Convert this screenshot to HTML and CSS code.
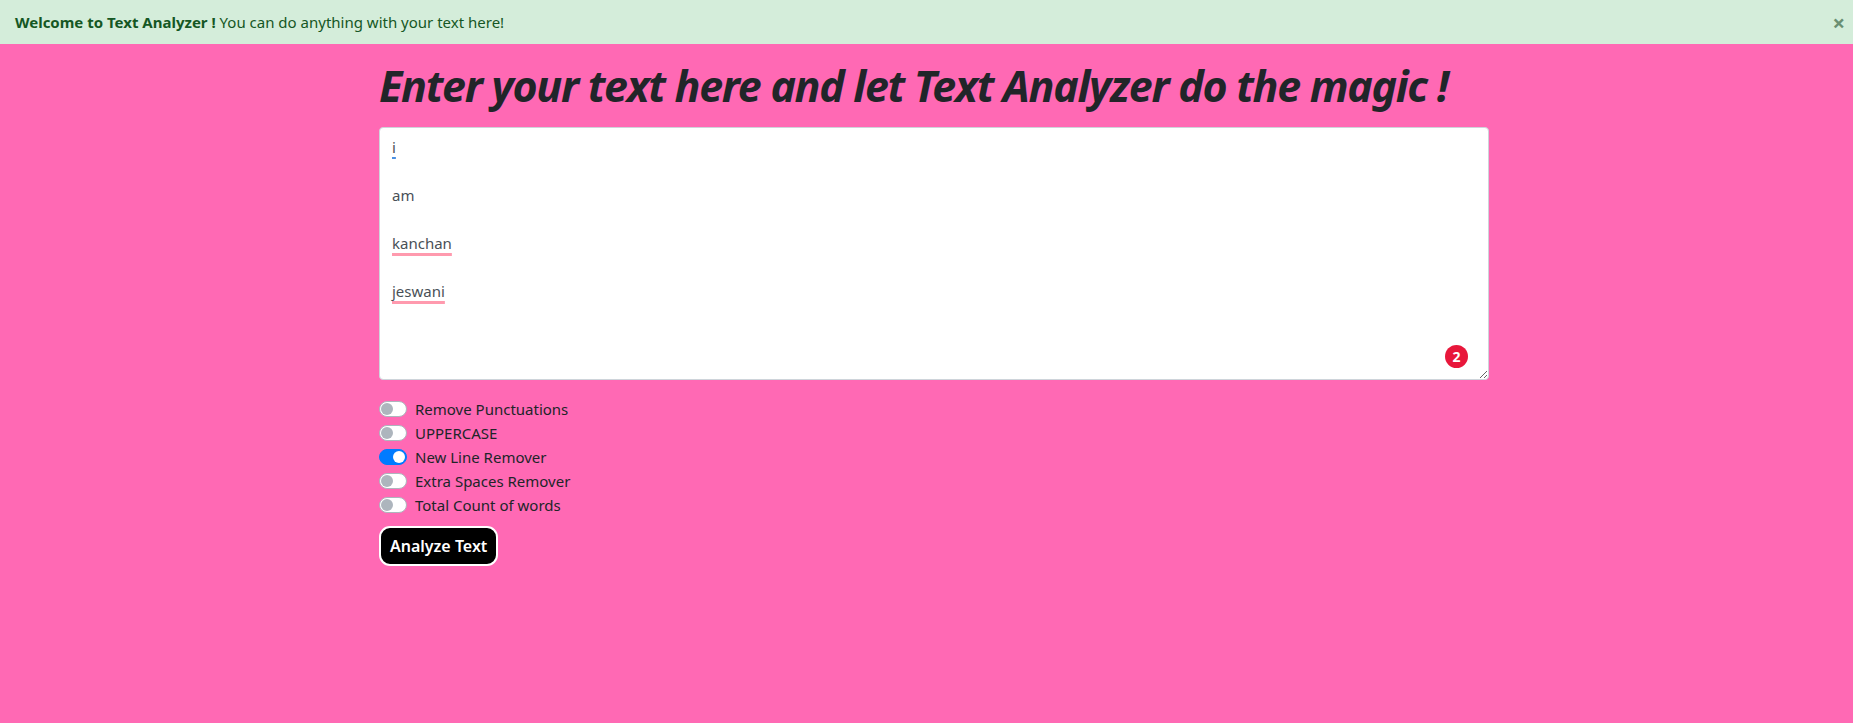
FILE: index.html
```html
<!DOCTYPE html>
<html>
<head>
<meta charset="utf-8">
<link rel="stylesheet" href="styles.css">
<title>Text Analyzer</title>
</head>
<body>
<div class="alert">
  <div class="alert-text"><strong>Welcome to Text Analyzer !</strong> You can do anything with your text here!</div>
  <span class="close">&times;</span>
</div>
<main class="container">
  <h1 class="title">Enter your text here and let Text Analyzer do the magic !</h1>
  <div class="editor">
    <div class="text-box"><span class="u-blue">i</span>

am

<span class="u-red">kanchan</span>

<span class="u-red">jeswani</span></div>
    <span class="badge">2</span>
  </div>
  <div class="switches">
    <label class="switch-row"><span class="switch"></span><span>Remove Punctuations</span></label>
    <label class="switch-row"><span class="switch"></span><span>UPPERCASE</span></label>
    <label class="switch-row"><span class="switch on"></span><span>New Line Remover</span></label>
    <label class="switch-row"><span class="switch"></span><span>Extra Spaces Remover</span></label>
    <label class="switch-row"><span class="switch"></span><span>Total Count of words</span></label>
  </div>
  <button class="btn">Analyze Text</button>
</main>
</body>
</html>
```
FILE: styles.css
```css
* { box-sizing: border-box; }
html, body { margin: 0; padding: 0; }
body {
  background: #ff69b4;
  font-family: "Noto Sans", "Open Sans", sans-serif;
  color: #212529;
  font-size: 15px;
  height: 723px;
  overflow: hidden;
}
.alert {
  height: 44px;
  background: #d4edda;
  color: #155724;
  display: flex;
  align-items: center;
  justify-content: space-between;
  padding: 0 8px 0 15px;
  font-size: 15px;
}
.alert-text strong { font-weight: 700; }
.close {
  color: #6a8f73;
  font-size: 22px;
  font-weight: 700;
  line-height: 1;
}
.container {
  width: 1125px;
  margin: 0 auto;
  padding-left: 15px;
}
.title {
  margin: 16px 0 15px;
  font-size: 43px;
  font-style: italic;
  font-weight: 700;
  line-height: 1.2;
  letter-spacing: -1.3px;
  color: #212529;
}
.editor {
  position: relative;
  width: 1110px;
}
.text-box {
  width: 1110px;
  height: 253px;
  background: #fff;
  border: 1px solid #ced4da;
  border-radius: 4px;
  padding: 7px 12px 6px;
  white-space: pre-wrap;
  line-height: 24px;
  font-size: 15px;
  color: #495057;
  resize: both;
  overflow: auto;
}
.u-red {
  text-decoration: underline;
  text-decoration-color: #ff9aae;
  text-decoration-thickness: 3px;
  text-underline-offset: 4px;
}
.u-blue {
  text-decoration: underline;
  text-decoration-color: #4a90e2;
  text-decoration-thickness: 2px;
  text-underline-offset: 4px;
}
.badge {
  position: absolute;
  right: 21px;
  bottom: 12px;
  width: 23px;
  height: 23px;
  border-radius: 50%;
  background: #e8173b;
  color: #fff;
  font-size: 14px;
  font-weight: 700;
  display: flex;
  align-items: center;
  justify-content: center;
}
.switches {
  margin-top: 17px;
  display: flex;
  flex-direction: column;
}
.switch-row {
  display: flex;
  align-items: center;
  height: 24px;
  gap: 8px;
  font-size: 15px;
}
.switch {
  position: relative;
  width: 28px;
  height: 16px;
  border-radius: 8px;
  background: #fff;
  border: 1px solid #adb5bd;
}
.switch::after {
  content: "";
  position: absolute;
  left: 1px;
  top: 1px;
  width: 12px;
  height: 12px;
  border-radius: 50%;
  background: #adb5bd;
}
.switch.on {
  background: #007bff;
  border-color: #007bff;
}
.switch.on::after {
  left: auto;
  right: 1px;
  background: #fff;
}
.btn {
  margin-top: 9px;
  height: 40px;
  padding: 0 9px;
  background: #000;
  color: #fff;
  border: 2px solid #fff;
  border-radius: 11px;
  font-family: inherit;
  font-size: 16px;
  font-weight: 600;
}
```
